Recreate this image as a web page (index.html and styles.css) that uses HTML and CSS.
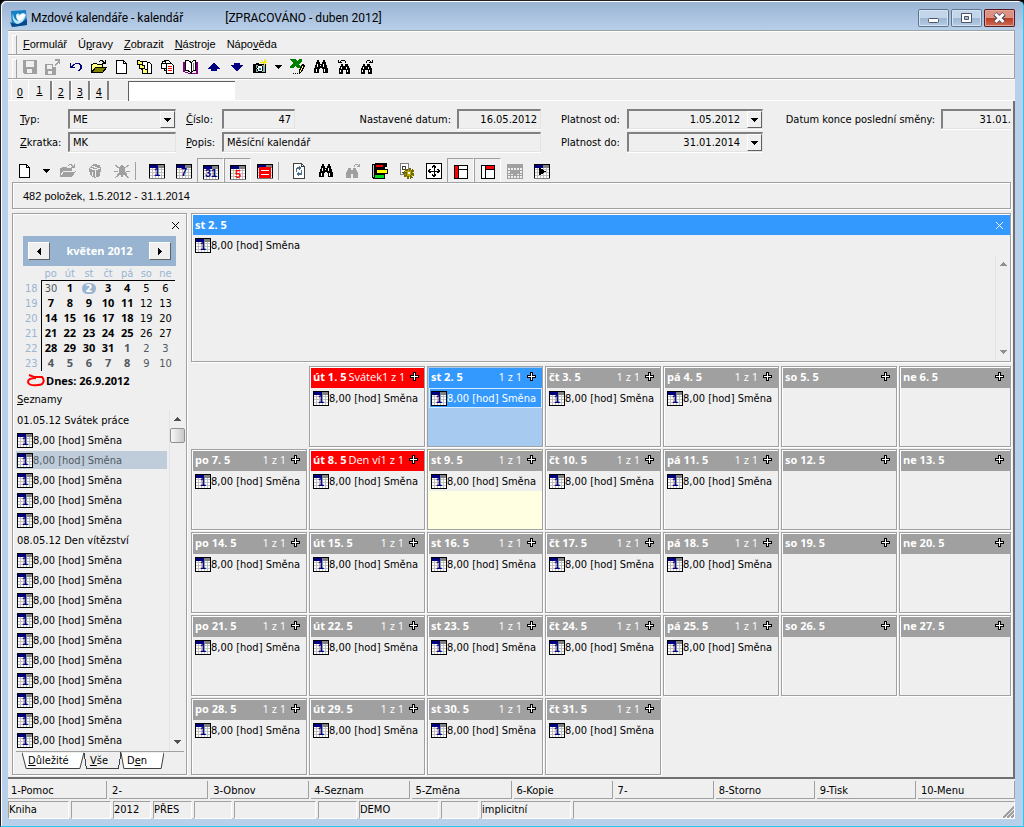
FILE: index.html
```html
<!DOCTYPE html>
<html lang="cs">
<head>
<meta charset="utf-8">
<title>Mzdové kalendáře - kalendář</title>
<link rel="stylesheet" href="styles.css">
</head>
<body>
<svg class="sprite" width="0" height="0" aria-hidden="true">
  <symbol id="cal" viewBox="0 0 16 15"><path fill="#fff" d="M0 0h16v15H0z"/><path stroke="#c0c0c0" d="M3.500 4v10M6.500 4v10M9.500 4v10M12.500 4v10M1 5.500h14M1 8.500h14M1 11.500h14"/><path fill="#000080" d="M1 1h8v3H1z"/><path fill="#808080" d="M9 1h6v3H9z"/><path fill="none" stroke="#000" d="M.5.500h15v14H.5z"/></symbol>
  <symbol id="cal1" viewBox="0 0 16 15"><use href="#cal"/><text x="8" y="12" class="num">1</text></symbol>
  <symbol id="cal7" viewBox="0 0 16 15"><use href="#cal"/><text x="8" y="12" class="num">7</text></symbol>
  <symbol id="cal31" viewBox="0 0 16 15"><use href="#cal"/><text x="8" y="12" class="num">31</text></symbol>
  <symbol id="cal5" viewBox="0 0 16 15"><use href="#cal"/><text x="8" y="13" class="num red">5</text></symbol>
  <symbol id="calred" viewBox="0 0 16 15"><use href="#cal"/><path fill="red" d="M2 3h12v11H2z"/><path fill="#fff" d="M4 6h8v1H4zM4 10h8v1H4z"/></symbol>
  <symbol id="calplay" viewBox="0 0 16 15"><use href="#cal"/><path d="M5 4l7 4-7 4z"/></symbol>
  <symbol id="plus" viewBox="0 0 9 9"><path d="M3 0h3v3h3v3H6v3H3V6H0V3h3z"/><path fill="#fff" d="M4 1h1v3h3v1H5v3H4V5H1V4h3z"/></symbol>
  <symbol id="save" viewBox="0 0 16 16"><path fill="#a0a0a0" fill-rule="evenodd" d="M1 1h14v14H2l-1-1zM4 2v6h8V2zM5 10v4h5v-4z"/></symbol>
  <symbol id="saveas" viewBox="0 0 16 16"><path fill="#a0a0a0" fill-rule="evenodd" d="M0 5h8v3h3v8H0zM2 6v4h5V6zM3 12v3h4v-3z"/><path fill="#a0a0a0" d="M10 0h5v5h-1V3l-4 4-1-1 4-4h-3z"/></symbol>
  <symbol id="undo" viewBox="0 0 16 16"><path fill="#000080" d="M2 4h1v3h1V6h1V5h2V4h5v1h1v1h1v4h-1v1h-1v1h-2v-1h1v-1h1V6h-1V5H7v1H6v1H5v1h2v1H2z"/></symbol>
  <symbol id="open" viewBox="0 0 16 16"><path fill="#ffff80" stroke="#000" d="M.5 13.500v-8h1l1-1h3l1 1h5v3h4l-4 5z"/><path fill="#808000" stroke="#000" d="M.5 13.500l4-5h11l-4 5z"/><path d="M8 2h1V1h3v1h1v1h1V1h1v4h-4V4h1V3h-1V2H9v1H8z"/></symbol>
  <symbol id="opengray" viewBox="0 0 16 16"><path fill="#a0a0a0" d="M0 14V5h1l1-1h4l1 1h5v3h4l-4 6z"/><path stroke="#efefef" d="M4 8.500h11M1 12l3-4"/><path fill="#a0a0a0" d="M8 2h1V1h3v1h1v1h1V1h1v4h-4V4h1V3h-1V2H9v1H8z"/></symbol>
  <symbol id="page" viewBox="0 0 16 16"><path fill="#fff" stroke="#000" d="M2.500 1.500h7l3 3v10h-10z"/><path fill="none" stroke="#000" d="M9.500 1.500v3h3"/></symbol>
  <symbol id="tree" viewBox="0 0 16 16"><path fill="#fff" stroke="#000" d="M7.500 3.500h5l2 2v9h-7z"/><path fill="#fff" stroke="#000" d="M4.500 2.500h5l1 1v7h-6z"/><path fill="#ffff60" stroke="#000" d="M.5 1.500h2l1 1h2v3h-5zM2.500 5.500h2l1 1h2v3h-5zM5.500 9.500h2l1 1h2v4h-5z"/></symbol>
  <symbol id="copy" viewBox="0 0 16 16"><path fill="#fff" stroke="#000" d="M4.500 1.500h4l2 2v8h-6z"/><path fill="#fff" stroke="#000" d="M1.500 4.500h5v5h-5zM2.500 4.500v-2h3v2"/><path fill="#fff" stroke="#000" d="M6.500 4.500h5l2 2v8h-7z"/><path stroke="red" d="M8 7.500h4M8 9.500h4M8 11.500h4"/></symbol>
  <symbol id="book" viewBox="0 0 16 16"><path fill="#800080" d="M0 3h2v10l5 1h6V3h2v12H6l-6-2z"/><path fill="#fff" stroke="#000" d="M2.500 1.500c3 0 5 1 5.500 2v10c-1-1-3-2-5.500-2z"/><path fill="#fff" stroke="#000" d="M8.500 3.500l2-2h2v10h-2l-2 2z"/><path stroke="#808080" d="M10.500 4v7"/></symbol>
  <symbol id="up" viewBox="0 0 16 16"><path fill="#000080" d="M8 4h1v1h1v1h1v1h1v1h1v1h1v1h-3v2H5v-2H2V9h1V8h1V7h1V6h1V5h1V4z"/></symbol>
  <symbol id="down" viewBox="0 0 16 16"><path fill="#000080" d="M5 4h6v2h3v1h-1v1h-1v1h-1v1h-1v1H9v1H7v-1H6v-1H5V9H4V8H3V7H2V6h3z"/></symbol>
  <symbol id="camera" viewBox="0 0 16 16"><path fill="#90b0b0" stroke="#000" d="M1.500 5.500h12v8h-12z"/><path d="M2 6h2v7H2zM4 4h3v1H4z"/><circle cx="8" cy="9.500" r="3" fill="#fff" stroke="#000"/><path fill="#008080" d="M7 9h2v2H7z"/><path stroke="#f0e800" d="M9.500 1.500l4 4M14.500 1.500l-4 4M12 0v7M8 3.500h7"/></symbol>
  <symbol id="excel" viewBox="0 0 16 16"><path fill="#008000" d="M0 0h6l1 2 2-2h3v2L9 5l2 3v1H7L5 7 3 9H0V8l3-4-3-3z"/><path fill="#ffff60" stroke="#000" d="M12.500 5.500l2 1-3 6-2 2v-3z"/><path d="M3 14h1v1H3zM5 14h1v1H5zM7 14h1v1H7z"/></symbol>
  <symbol id="bino" viewBox="0 0 16 16"><path d="M4 1h2v2h1v2h2V3h1V1h2v2h1v3h1v3h1v5h-5v-4H9V9H7v1H6v4H1V9h1V6h1V3h1z"/><path fill="#fff" d="M4 5h1v3H4zM3 10h1v3H3zM10 5h1v3h-1zM11 10h1v3h-1zM7 6h1v1H7z"/></symbol>
  <symbol id="bino-prev" viewBox="0 0 16 16"><path d="M5 5h2v2h2V5h3v2h1v2h1v6h-4v-4H7v4H3V9h1V7h1zM2 1h1v2h1V2h1V1h4v1h1v2H9V2H5v1h1v1H2z"/><path fill="#fff" d="M5 8h1v2H5zM4 11h1v2H4zM10 8h1v2h-1zM11 11h1v2h-1z"/></symbol>
  <symbol id="bino-next" viewBox="0 0 16 16"><path d="M4 5h2v2h2V5h3v2h1v2h1v6H9v-4H6v4H2V9h1V7h1zM14 1h-1v2h-1V2h-1V1H8v1H7v2h1V2h3v1h-1v1h4z"/><path fill="#fff" d="M4 8h1v2H4zM3 11h1v2H3zM9 8h1v2H9zM10 11h1v2h-1z"/></symbol>
  <symbol id="bino-gray" viewBox="0 0 16 16"><path fill="#a0a0a0" d="M3 5h3v2h2V5h3v2h1v2h1v6H8v-4H6v4H1V9h1V7h1zM15 1h-1v1h-1V1h-3v1H9v2h1V2h3v1h-1v1h3z"/></symbol>
  <symbol id="cube" viewBox="0 0 16 16"><path fill="#a0a0a0" d="M2 5l5-4 6 1 1 3-1 8-5 2-5-3z"/><path stroke="#efefef" fill="none" d="M3 5l5 2 5-2M8 7v7M5 3l5 2M5 9v4"/></symbol>
  <symbol id="bell" viewBox="0 0 16 16"><path fill="#a0a0a0" d="M7 2h2l2 3v4l2 2v1H9v2H7v-2H3v-1l2-2V5z"/><path stroke="#a0a0a0" d="M1 2l4 3M15 2l-4 3M0 8.500h4M16 8.500h-4M1 15l4-3M15 15l-4-3"/></symbol>
  <symbol id="refresh" viewBox="0 0 16 16"><path fill="#fff" stroke="#404040" d="M2.500.500h8l3 3v12h-11z"/><path fill="none" stroke="#404040" d="M10.500.500v3h3"/><path fill="#507090" d="M8 3l3 2-3 2V6H6v3H5V5l1-1h2zM8 13l-3-2 3-2v1h2V7h1v4l-1 1H8z"/></symbol>
  <symbol id="bars" viewBox="0 0 16 16"><path d="M0 1h2l1-1h12v4h-2v2h3v5h-3v5H1L0 14z"/><path fill="red" d="M4 2h7v2H4z"/><path fill="#ff0" d="M5 7h10v3H5z"/><path fill="#00d820" d="M3 12h9v3H3z"/><path stroke="#c0c0c0" d="M1.500 2v12"/><path fill="#efefef" d="M13 4h3v2h-3zM13 11h3v5h-3z"/></symbol>
  <symbol id="gear" viewBox="0 0 16 16"><path fill="#fff" stroke="#808080" d="M1.500.500h8v11h-8z"/><path fill="none" stroke="#404040" d="M3.500 3.500h3v3h-3zM3 9.500h3"/><circle cx="10" cy="10.500" r="4" fill="#b8a800" stroke="#706800" stroke-width="3" stroke-dasharray="2 1"/><path fill="#fff" d="M9 9h2v2H9z"/></symbol>
  <symbol id="fit" viewBox="0 0 16 16"><path fill="#fff" stroke="#000" d="M.5.500h15v15H.5z"/><path fill="none" stroke="#000" d="M8 2v12M2 8h12M6 4.500L8 2.500l2 2M6 11.500l2 2 2-2M4.500 6l-2 2 2 2M11.500 6l2 2-2 2"/></symbol>
  <symbol id="paneleft" viewBox="0 0 16 16"><path fill="#fff" stroke="#000" d="M1.500 1.500h13v13h-13zM5.500 1v14M5 5.500h10"/><path fill="red" d="M2 2h3v12H2z"/></symbol>
  <symbol id="panetop" viewBox="0 0 16 16"><path fill="#fff" stroke="#000" d="M1.500 1.500h13v13h-13zM5.500 1v14M5 5.500h10"/><path fill="red" d="M6 2h8v3H6z"/></symbol>
  <symbol id="gridgray" viewBox="0 0 16 15"><path fill="#a0a0a0" d="M0 0h16v15H0z"/><path fill="#efefef" d="M1 4h2v2H1zM4 4h2v2H4zM7 4h2v2H7zM10 4h2v2h-2zM13 4h2v2h-2zM1 7h2v2H1zM13 7h2v2h-2zM1 10h2v1H1zM4 10h2v1H4zM10 10h2v1h-2zM13 10h2v1h-2zM1 12h2v2H1zM4 12h2v2H4zM7 12h2v2H7zM10 12h2v2h-2zM13 12h2v2h-2z"/></symbol>
  <symbol id="close" viewBox="0 0 9 9"><path fill="none" stroke="currentColor" stroke-width="1.300" d="M1 1l7 7M8 1L1 8"/></symbol>
  <symbol id="caret" viewBox="0 0 7 4"><path fill="currentColor" d="M0 0h7v1H6v1H5v1H4v1H3V3H2V2H1V1H0z"/></symbol>
  <symbol id="prev" viewBox="0 0 4 7"><path d="M3 0h1v7H3V6H2V5H1V4H0V3h1V2h1V1h1z"/></symbol>
  <symbol id="next" viewBox="0 0 4 7"><path d="M1 0H0v7h1V6h1V5h1V4h1V3H3V2H2V1H1z"/></symbol>
  <symbol id="scrollup" viewBox="0 0 7 4"><path fill="currentColor" d="M3 0h1v1h1v1h1v1h1v1H0V3h1V2h1V1h1z"/></symbol>
  <symbol id="tabshape" viewBox="0 0 60 17" preserveAspectRatio="none"><path fill="currentColor" stroke="#404040" vector-effect="non-scaling-stroke" d="M0 .5L4 16.500H56L60 .5"/></symbol>
</svg>

<div class="window">
  <header class="titlebar">
    <svg class="logo" viewBox="0 0 17 17"><path fill="#1580c4" d="M1 1l15-1 1 15-15 2z"/><path fill="#0a4a88" d="M0 12c5 3 11 2 17-3v6L2 17z"/><path fill="#bfe6f8" d="M3 3c-1 5 0 9 4 11 4 0 8-4 9-9-1-2-4-3-6 0C9 3 7 3 6 5c0 3 1 5 3 6-3 0-6-3-6-8z"/><path fill="#fff" d="M9 7c1-3 4-4 6-2-1 3-3 5-6 6-2-2-3-4-2-6 1 0 2 1 2 2z"/></svg>
    <h1>Mzdové kalendáře - kalendář</h1>
    <span class="state">[ZPRACOVÁNO - duben 2012]</span>
    <div class="winbtns">
      <button aria-label="Minimalizovat"><svg width="31" height="18"><rect x="10.500" y="9.500" width="10" height="4" rx="1" fill="#fff" stroke="#4a5568"/></svg></button>
      <button aria-label="Maximalizovat"><svg width="31" height="18"><path fill="#fff" stroke="#4a5568" d="M10.500 4.500h10v9h-10z"/><path fill="#a9c1dc" stroke="#4a5568" d="M13.500 7.500h4v3h-4z"/></svg></button>
      <button class="x" aria-label="Zavřít"><svg width="31" height="18"><path stroke="#4a4a5a" stroke-width="5" d="M11 5l9 8M20 5l-9 8"/><path stroke="#fff" stroke-width="3" d="M11.500 5l8 8M19.500 5l-8 8"/></svg></button>
    </div>
  </header>

  <div class="client">
    <nav class="band menu">
      <button><u>F</u>ormulář</button><button>Ú<u>p</u>ravy</button><button><u>Z</u>obrazit</button><button><u>N</u>ástroje</button><button>Nápo<u>v</u>ěda</button>
    </nav>
    <div class="band tools" role="toolbar" aria-label="Hlavní">
      <button aria-label="Uložit"><svg><use href="#save"/></svg></button><button aria-label="Uložit jako"><svg><use href="#saveas"/></svg></button><button aria-label="Zpět"><svg><use href="#undo"/></svg></button><button aria-label="Otevřít"><svg><use href="#open"/></svg></button><button aria-label="Nový"><svg><use href="#page"/></svg></button><button aria-label="Strom"><svg><use href="#tree"/></svg></button><button aria-label="Kopie"><svg><use href="#copy"/></svg></button><button aria-label="Kniha"><svg><use href="#book"/></svg></button><button aria-label="Nahoru"><svg><use href="#up"/></svg></button><button aria-label="Dolů"><svg><use href="#down"/></svg></button><button aria-label="Snímek"><svg><use href="#camera"/></svg></button><button class="drop" aria-label="Více"><svg class="caret"><use href="#caret"/></svg></button><button aria-label="Export"><svg><use href="#excel"/></svg></button><button aria-label="Hledat"><svg><use href="#bino"/></svg></button><button aria-label="Hledat předchozí"><svg><use href="#bino-prev"/></svg></button><button aria-label="Hledat další"><svg><use href="#bino-next"/></svg></button>
    </div>
    <div class="pages">
      <button><u>0</u></button><button class="on"><u>1</u></button><button><u>2</u></button><button><u>3</u></button><button><u>4</u></button>
      <input type="text" aria-label="Vyhledat">
    </div>

    <main class="sheet">
      <form class="fields">
        <label for="typ"><u>T</u>yp:</label>
        <div class="field combo"><select id="typ"><option>ME</option></select><span class="arrow"><svg class="caret"><use href="#caret"/></svg></span></div>
        <label class="mid" for="cislo"><u>Č</u>íslo:</label>
        <input class="field num-in" id="cislo" value="47">
        <label class="right" for="nd">Nastavené datum:</label>
        <input class="field num-in" id="nd" value="16.05.2012">
        <label class="plat" for="od">Platnost od:</label>
        <div class="field combo"><input class="num-in" id="od" value="1.05.2012"><button type="button" class="arrow" aria-label="Vybrat datum od"><svg class="caret"><use href="#caret"/></svg></button></div>
        <label class="right" for="konec">Datum konce poslední směny:</label>
        <input class="field num-in cut" id="konec" value="31.01.">
        <label for="zkr"><u>Z</u>kratka:</label>
        <input class="field" id="zkr" value="MK">
        <label class="mid" for="popis"><u>P</u>opis:</label>
        <input class="field wide" id="popis" value="Měsíční kalendář">
        <label class="plat" for="do">Platnost do:</label>
        <div class="field combo"><input class="num-in" id="do" value="31.01.2014"><button type="button" class="arrow" aria-label="Vybrat datum do"><svg class="caret"><use href="#caret"/></svg></button></div>
      </form>

      <div class="tools second" role="toolbar" aria-label="Kalendář">
        <button aria-label="Nový"><svg><use href="#page"/></svg></button><button class="drop" aria-label="Více"><svg class="caret"><use href="#caret"/></svg></button><button aria-label="Otevřít"><svg><use href="#opengray"/></svg></button><button aria-label="Koš"><svg><use href="#cube"/></svg></button><button aria-label="Upozornění"><svg><use href="#bell"/></svg></button><span class="sep"></span><button aria-label="Den"><svg><use href="#cal1"/></svg></button><button aria-label="Týden"><svg><use href="#cal7"/></svg></button><button class="on" aria-label="Měsíc"><svg><use href="#cal31"/></svg></button><button class="on" aria-label="Svátky"><svg><use href="#cal5"/></svg></button><button aria-label="Výluky"><svg><use href="#calred"/></svg></button><span class="sep"></span><button aria-label="Obnovit"><svg><use href="#refresh"/></svg></button><button aria-label="Hledat"><svg><use href="#bino"/></svg></button><button aria-label="Hledat další"><svg><use href="#bino-gray"/></svg></button><button aria-label="Barvy"><svg><use href="#bars"/></svg></button><button aria-label="Nastavení"><svg><use href="#gear"/></svg></button><button aria-label="Přizpůsobit"><svg><use href="#fit"/></svg></button><button class="on" aria-label="Levý panel"><svg><use href="#paneleft"/></svg></button><button class="on" aria-label="Horní panel"><svg><use href="#panetop"/></svg></button><button aria-label="Mřížka"><svg><use href="#gridgray"/></svg></button><button aria-label="Spustit"><svg><use href="#calplay"/></svg></button>
      </div>

      <div class="info">482 položek, 1.5.2012 - 31.1.2014</div>

      <div class="work">
        <aside class="side frame">
          <button class="shut" aria-label="Zavřít panel"><svg class="xs"><use href="#close"/></svg></button>
          <div class="month"><button aria-label="Předchozí měsíc"><svg width="4" height="7"><use href="#prev"/></svg></button><strong>květen 2012</strong><button aria-label="Další měsíc"><svg width="4" height="7"><use href="#next"/></svg></button></div>
          <table class="mini">
            <thead><tr><td></td><th>po</th><th>út</th><th>st</th><th>čt</th><th>pá</th><th>so</th><th>ne</th></tr></thead>
            <tbody>
              <tr><th>18</th><td class="dim">30</td><td><b>1</b></td><td><span class="sel">2</span></td><td><b>3</b></td><td><b>4</b></td><td>5</td><td>6</td></tr>
              <tr><th>19</th><td><b>7</b></td><td><b>8</b></td><td><b>9</b></td><td><b>10</b></td><td><b>11</b></td><td>12</td><td>13</td></tr>
              <tr><th>20</th><td><b>14</b></td><td><b>15</b></td><td><b>16</b></td><td><b>17</b></td><td><b>18</b></td><td>19</td><td>20</td></tr>
              <tr><th>21</th><td><b>21</b></td><td><b>22</b></td><td><b>23</b></td><td><b>24</b></td><td><b>25</b></td><td>26</td><td>27</td></tr>
              <tr><th>22</th><td><b>28</b></td><td><b>29</b></td><td><b>30</b></td><td><b>31</b></td><td class="dim"><b>1</b></td><td class="dim">2</td><td class="dim">3</td></tr>
              <tr><th>23</th><td class="dim"><b>4</b></td><td class="dim"><b>5</b></td><td class="dim"><b>6</b></td><td class="dim"><b>7</b></td><td class="dim"><b>8</b></td><td class="dim">9</td><td class="dim">10</td></tr>
            </tbody>
          </table>
          <div class="today"><svg width="18" height="14" viewBox="0 0 18 14"><path fill="none" stroke="red" stroke-width="2" d="M2 1l5 2 8 0c3 3 2 8-4 8-7 1-10-1-10-3 0-3 4-4 8-4"/></svg><b>Dnes: 26.9.2012</b></div>
          <div class="lists"><u>S</u>eznamy</div>
          <div class="listbox">
            <ul>
              <li>01.05.12 Svátek práce</li>
              <li><svg><use href="#cal1"/></svg>8,00 [hod] Směna</li>
              <li class="sel"><svg><use href="#cal1"/></svg>8,00 [hod] Směna</li>
              <li><svg><use href="#cal1"/></svg>8,00 [hod] Směna</li>
              <li><svg><use href="#cal1"/></svg>8,00 [hod] Směna</li>
              <li><svg><use href="#cal1"/></svg>8,00 [hod] Směna</li>
              <li>08.05.12 Den vítězství</li>
              <li><svg><use href="#cal1"/></svg>8,00 [hod] Směna</li>
              <li><svg><use href="#cal1"/></svg>8,00 [hod] Směna</li>
              <li><svg><use href="#cal1"/></svg>8,00 [hod] Směna</li>
              <li><svg><use href="#cal1"/></svg>8,00 [hod] Směna</li>
              <li><svg><use href="#cal1"/></svg>8,00 [hod] Směna</li>
              <li><svg><use href="#cal1"/></svg>8,00 [hod] Směna</li>
              <li><svg><use href="#cal1"/></svg>8,00 [hod] Směna</li>
              <li><svg><use href="#cal1"/></svg>8,00 [hod] Směna</li>
              <li><svg><use href="#cal1"/></svg>8,00 [hod] Směna</li>
              <li><svg><use href="#cal1"/></svg>8,00 [hod] Směna</li>
            </ul>
            <div class="scroll"><svg class="caret"><use href="#scrollup"/></svg><span class="thumb"></span><svg class="caret end"><use href="#caret"/></svg></div>
          </div>
          <div class="sheets">
            <button class="t1"><svg><use href="#tabshape"/></svg><span><u>D</u>ůležité</span></button><button class="t2 on"><svg><use href="#tabshape"/></svg><span><u>V</u>še</span></button><button class="t3"><svg><use href="#tabshape"/></svg><span>D<u>e</u>n</span></button>
          </div>
        </aside>

        <section class="right-pane">
          <article class="detail frame">
            <h2>st 2. 5<button aria-label="Zavřít detail"><svg class="xs"><use href="#close"/></svg></button></h2>
            <p class="item"><svg><use href="#cal1"/></svg>8,00 [hod] Směna</p>
            <div class="scroll faint"><svg class="caret"><use href="#scrollup"/></svg><svg class="caret end"><use href="#caret"/></svg></div>
          </article>
          <div class="grid">
            <div></div>
            <article class="day frame hol"><h3>út 1. 5 <em>Svátek</em><i>1 z 1</i><svg><use href="#plus"/></svg></h3><p class="item"><svg><use href="#cal1"/></svg>8,00 [hod] Směna</p></article>
            <article class="day frame cur"><h3>st 2. 5<i>1 z 1</i><svg><use href="#plus"/></svg></h3><p class="item"><svg><use href="#cal1"/></svg>8,00 [hod] Směna</p></article>
            <article class="day frame"><h3>čt 3. 5<i>1 z 1</i><svg><use href="#plus"/></svg></h3><p class="item"><svg><use href="#cal1"/></svg>8,00 [hod] Směna</p></article>
            <article class="day frame"><h3>pá 4. 5<i>1 z 1</i><svg><use href="#plus"/></svg></h3><p class="item"><svg><use href="#cal1"/></svg>8,00 [hod] Směna</p></article>
            <article class="day frame"><h3>so 5. 5<i></i><svg><use href="#plus"/></svg></h3></article>
            <article class="day frame"><h3>ne 6. 5<i></i><svg><use href="#plus"/></svg></h3></article>

            <article class="day frame"><h3>po 7. 5<i>1 z 1</i><svg><use href="#plus"/></svg></h3><p class="item"><svg><use href="#cal1"/></svg>8,00 [hod] Směna</p></article>
            <article class="day frame hol"><h3>út 8. 5 <em>Den ví</em><i>1 z 1</i><svg><use href="#plus"/></svg></h3><p class="item"><svg><use href="#cal1"/></svg>8,00 [hod] Směna</p></article>
            <article class="day frame note"><h3>st 9. 5<i>1 z 1</i><svg><use href="#plus"/></svg></h3><p class="item"><svg><use href="#cal1"/></svg>8,00 [hod] Směna</p></article>
            <article class="day frame"><h3>čt 10. 5<i>1 z 1</i><svg><use href="#plus"/></svg></h3><p class="item"><svg><use href="#cal1"/></svg>8,00 [hod] Směna</p></article>
            <article class="day frame"><h3>pá 11. 5<i>1 z 1</i><svg><use href="#plus"/></svg></h3><p class="item"><svg><use href="#cal1"/></svg>8,00 [hod] Směna</p></article>
            <article class="day frame"><h3>so 12. 5<i></i><svg><use href="#plus"/></svg></h3></article>
            <article class="day frame"><h3>ne 13. 5<i></i><svg><use href="#plus"/></svg></h3></article>

            <article class="day frame"><h3>po 14. 5<i>1 z 1</i><svg><use href="#plus"/></svg></h3><p class="item"><svg><use href="#cal1"/></svg>8,00 [hod] Směna</p></article>
            <article class="day frame"><h3>út 15. 5<i>1 z 1</i><svg><use href="#plus"/></svg></h3><p class="item"><svg><use href="#cal1"/></svg>8,00 [hod] Směna</p></article>
            <article class="day frame"><h3>st 16. 5<i>1 z 1</i><svg><use href="#plus"/></svg></h3><p class="item"><svg><use href="#cal1"/></svg>8,00 [hod] Směna</p></article>
            <article class="day frame"><h3>čt 17. 5<i>1 z 1</i><svg><use href="#plus"/></svg></h3><p class="item"><svg><use href="#cal1"/></svg>8,00 [hod] Směna</p></article>
            <article class="day frame"><h3>pá 18. 5<i>1 z 1</i><svg><use href="#plus"/></svg></h3><p class="item"><svg><use href="#cal1"/></svg>8,00 [hod] Směna</p></article>
            <article class="day frame"><h3>so 19. 5<i></i><svg><use href="#plus"/></svg></h3></article>
            <article class="day frame"><h3>ne 20. 5<i></i><svg><use href="#plus"/></svg></h3></article>

            <article class="day frame"><h3>po 21. 5<i>1 z 1</i><svg><use href="#plus"/></svg></h3><p class="item"><svg><use href="#cal1"/></svg>8,00 [hod] Směna</p></article>
            <article class="day frame"><h3>út 22. 5<i>1 z 1</i><svg><use href="#plus"/></svg></h3><p class="item"><svg><use href="#cal1"/></svg>8,00 [hod] Směna</p></article>
            <article class="day frame"><h3>st 23. 5<i>1 z 1</i><svg><use href="#plus"/></svg></h3><p class="item"><svg><use href="#cal1"/></svg>8,00 [hod] Směna</p></article>
            <article class="day frame"><h3>čt 24. 5<i>1 z 1</i><svg><use href="#plus"/></svg></h3><p class="item"><svg><use href="#cal1"/></svg>8,00 [hod] Směna</p></article>
            <article class="day frame"><h3>pá 25. 5<i>1 z 1</i><svg><use href="#plus"/></svg></h3><p class="item"><svg><use href="#cal1"/></svg>8,00 [hod] Směna</p></article>
            <article class="day frame"><h3>so 26. 5<i></i><svg><use href="#plus"/></svg></h3></article>
            <article class="day frame"><h3>ne 27. 5<i></i><svg><use href="#plus"/></svg></h3></article>

            <article class="day frame"><h3>po 28. 5<i>1 z 1</i><svg><use href="#plus"/></svg></h3><p class="item"><svg><use href="#cal1"/></svg>8,00 [hod] Směna</p></article>
            <article class="day frame"><h3>út 29. 5<i>1 z 1</i><svg><use href="#plus"/></svg></h3><p class="item"><svg><use href="#cal1"/></svg>8,00 [hod] Směna</p></article>
            <article class="day frame"><h3>st 30. 5<i>1 z 1</i><svg><use href="#plus"/></svg></h3><p class="item"><svg><use href="#cal1"/></svg>8,00 [hod] Směna</p></article>
            <article class="day frame"><h3>čt 31. 5<i>1 z 1</i><svg><use href="#plus"/></svg></h3><p class="item"><svg><use href="#cal1"/></svg>8,00 [hod] Směna</p></article>
          </div>
        </section>
      </div>
    </main>

    <footer>
      <div class="fkeys"><button>1-Pomoc</button><button>2-</button><button>3-Obnov</button><button>4-Seznam</button><button>5-Změna</button><button>6-Kopie</button><button>7-</button><button>8-Storno</button><button>9-Tisk</button><button>10-Menu</button></div>
      <div class="status"><span>Kniha</span><span></span><span>2012</span><span>PŘES</span><span></span><span></span><span></span><span>DEMO</span><span></span><span>implicitní</span><span class="last"><svg width="12" height="12"><path stroke="#a0a0a0" stroke-width="2" d="M1 12L12 1M5 12l7-7M9 12l3-3"/></svg></span></div>
    </footer>
  </div>
</div>
</body>
</html>
```
FILE: styles.css
```css
* { box-sizing: border-box; margin: 0; padding: 0; }
body { background: #000; color: #000; font: 11px/14px "DejaVu Sans Condensed", "DejaVu Sans", sans-serif; }
button, input, select { font: inherit; color: inherit; border: 0; background: none; border-radius: 0; outline: 0; }
u { text-decoration: underline; text-underline-offset: 1px; }
.sprite { display: none; }
symbol, svg { shape-rendering: crispEdges; }
.num { font: bold 11px "Liberation Sans", sans-serif; fill: #000080; text-anchor: middle; }
.num.red { fill: red; }

.window { min-height: 100vh; display: flex; flex-direction: column; padding: 0 8px 8px 7px; border: 1px solid #202028; border-right-color: #28c8f0; border-bottom-color: #28c8f0; border-radius: 6px 6px 0 0; box-shadow: inset 1px 1px #fff; background: linear-gradient(#99b3d2, #b9d0ea 30px, #b9d0ea); }
.titlebar { display: flex; align-items: center; height: 29px; padding: 5px 0 0 2px; font: 12px/16px Roboto, sans-serif; }
.logo { width: 17px; height: 17px; margin-right: 4px; shape-rendering: auto; }
.titlebar h1 { font: inherit; white-space: nowrap; }
.state { flex: 1; margin-left: 42px; white-space: nowrap; }
.winbtns { display: flex; gap: 2px; }
.winbtns button { width: 31px; height: 18px; border-radius: 2px; box-shadow: inset 0 0 0 1px #60738c, inset 0 0 0 2px #d5e3f2; background: linear-gradient(#c3d5e9 50%, #9cb6d2 50%, #b8cfe6); }
.winbtns .x { box-shadow: inset 0 0 0 1px #571a20, inset 0 0 0 2px #e2a59b; background: linear-gradient(#dd9182 50%, #b93a20 50%, #d2705a); }
.winbtns svg { display: block; shape-rendering: auto; }

.client { flex: 1; display: flex; flex-direction: column; background: #efefef; }
.band { display: flex; align-items: center; height: 24px; padding-left: 10px; border: 1px solid #a0a0a0; border-width: 1px 1px 0 0; box-shadow: inset 0 1px #fff; position: relative; }
.band::before { content: ""; position: absolute; left: 4px; top: 4px; width: 3px; height: 18px; border: 1px solid #fff; border-right-color: #a0a0a0; border-bottom-color: #a0a0a0; }
.menu { padding-left: 15px; gap: 11px; font: 11px/14px "Liberation Sans", sans-serif; padding-top: 3px; }
.tools { display: flex; }
.tools button { width: 23px; height: 23px; display: grid; place-items: center; }
.tools svg { width: 16px; height: 16px; display: block; }
.tools .drop { width: 15px; }
svg.caret { width: 7px; height: 4px; display: block; }

.pages { display: flex; height: 23px; padding: 2px 0 0 3px; border-top: 1px solid #a0a0a0; box-shadow: inset 0 1px #fff; border-bottom: 1px solid #fff; }
.pages button { width: 19px; padding-top: 4px; border-right: 2px solid #808080; border-left: 1px solid #fff; }
.pages button:first-child { width: 17px; border-right: 0; }
.pages .on { width: 24px; padding-top: 0; }
.pages input { width: 107px; height: 20px; margin-left: 19px; background: #fff; border-top: 1px solid #606060; border-left: 1px solid #606060; }

.sheet { flex: 1; display: flex; flex-direction: column; padding: 8px 2px 2px 4px; border-right: 2px solid #707070; border-bottom: 2px solid #707070; }
.fields { display: grid; grid-template-columns: 48px 108px 46px 73px 162px 84px 86px 136px 178px minmax(0, 1fr); row-gap: 3px; align-items: center; margin-left: 8px; }
.fields label { padding-top: 1px; }
.fields .mid { padding-left: 10px; }
.fields .right { text-align: right; padding-right: 6px; white-space: nowrap; }
.fields .plat { padding-left: 20px; }
.field { width: 100%; min-width: 0; height: 20px; padding: 0 3px; border: 1px solid #e3e3e3; border-top: 2px solid #808080; border-left: 2px solid #808080; box-shadow: 0 1px #fff; }
.combo { display: flex; padding: 0 0 0 3px; }
.combo select, .combo input { flex: 1; min-width: 0; appearance: none; }
.combo input { padding-right: 7px; }
.num-in { text-align: right; }
.cut { border-right: 0; padding-right: 0; }
.wide { grid-column: span 3; }
.arrow { width: 15px; display: grid; place-items: center; border: 1px solid #fff; border-right-color: #606060; border-bottom-color: #606060; }

.second { height: 24px; margin: 6px 0 0 -1px; }
.second button { width: 27px; height: 24px; padding-top: 2px; }
.second .drop { width: 16px; }
.second .on { border-top: 1px solid #a0a0a0; border-left: 1px solid #a0a0a0; border-right: 1px solid #fff; }
.sep { width: 8px; height: 18px; margin: 4px 0 2px; border-left: 1px solid #a0a0a0; }
.second .sep ~ .sep { width: 7px; }
.info { height: 27px; padding: 6px 10px; border: 1px solid #a0a0a0; box-shadow: inset 1px 1px #fff, 1px 1px #fff; font-family: "Liberation Sans", sans-serif; }

.work { flex: 1; display: flex; gap: 4px; margin-top: 4px; }
.frame { border: 1px solid #a0a0a0; box-shadow: 1px 1px #fff; padding: 1px 0 0 1px; background: linear-gradient(#fff, #fff) 0 0 / 100% 1px no-repeat, linear-gradient(#fff, #fff) 0 0 / 1px 100% no-repeat; }
.side { width: 175px; display: flex; flex-direction: column; }
.shut { align-self: flex-end; width: 21px; height: 21px; display: grid; place-items: center; }
.xs { width: 9px; height: 9px; display: block; shape-rendering: auto; }
b, strong { font-family: "Open Sans", sans-serif; font-weight: bold; }
.month { display: flex; align-items: center; justify-content: space-between; height: 30px; margin: 0 10px 0 9px; padding: 0 5px; background: #99b4d1; color: #fff; }
.month button { width: 22px; height: 18px; display: grid; place-items: center; background: #efefef; border: 1px solid #fff; border-right: 1px solid #606060; border-bottom: 1px solid #606060; }
.mini { border-collapse: collapse; margin: 1px 0 0 8px; table-layout: fixed; width: 153px; text-align: center; }
.mini th { font-weight: normal; color: #99b4d1; }
.mini td, .mini th { height: 15px; line-height: 15px; width: 19px; }
.mini b { line-height: 11px; }
.mini thead th, .mini thead td { height: 13px; line-height: 13px; }
.mini thead th { border-bottom: 1px solid #000; }
.mini tbody th { border-right: 1px solid #000; }
.mini .dim { color: #505860; }
.mini .sel { display: block; width: 14px; height: 11px; margin: 0 auto; line-height: 11px; border-radius: 6px; background: #99b4d1; color: #fff; font-weight: bold; }
.today { display: flex; height: 20px; align-items: center; padding-left: 13px; gap: 1px; }
.today svg { shape-rendering: auto; }
.lists { height: 19px; padding: 2px 3px; }
.listbox { flex: 1; display: flex; justify-content: space-between; padding: 0 2px 0 2px; }
ul { list-style: none; width: 151px; }
li, .item { display: flex; align-items: center; height: 20px; padding: 1px 0 0 1px; white-space: nowrap; }
li.sel { background: linear-gradient(#bfcddb, #bfcddb) 0 1px / 100% 18px no-repeat; color: #505860; }
li svg, .item svg { width: 16px; height: 15px; flex: none; }
.item { padding-left: 2px; }
.scroll { width: 15px; display: flex; flex-direction: column; align-items: center; padding: 7px 0; border-left: 1px solid #e3e3e3; color: #505050; }
.scroll .end { margin-top: auto; }
.thumb { width: 15px; height: 15px; margin-top: 7px; border: 1px solid #909090; border-radius: 2px; background: linear-gradient(90deg, #f8f8f8, #c8c8c8); }
.sheets { display: flex; height: 23px; margin: 0 2px 0 2px; padding-left: 6px; border-top: 1px solid #a0a0a0; }
.sheets button { position: relative; height: 17px; color: #fff; text-align: left; padding-left: 6px; }
.sheets button span { position: relative; color: #000; }
.sheets button svg { position: absolute; left: 0; top: 0; width: 100%; height: 17px; }
.sheets .on { color: #efefef; }
.t1 { width: 62px; }
.t2 { width: 37px; }
.t3 { width: 43px; }

.right-pane { flex: 1; min-width: 0; display: flex; flex-direction: column; gap: 4px; }
.detail { height: 149px; display: flex; flex-direction: column; }
h2, h3 { display: flex; align-items: center; height: 20px; flex: none; font: bold 11px/14px "Open Sans", sans-serif; color: #fff; background: #3399ff; padding-left: 2px; white-space: nowrap; }
h2 button { margin-left: auto; width: 21px; height: 20px; display: grid; place-items: center; }
.faint { flex: 1; align-self: flex-end; color: #909090; }
.grid { flex: 1; display: grid; grid-template-columns: repeat(6, minmax(0, 116fr)) minmax(0, 112fr); grid-template-rows: repeat(4, 81px) minmax(76px, 1fr); gap: 2px; }
.day { min-width: 0; }
h3 { background: #a0a0a0; padding-bottom: 2px; }
h3 em { font-style: normal; font-weight: normal; margin-left: 2px; }
h3 i { font-style: normal; font-weight: normal; margin-left: auto; }
h3 svg { width: 9px; height: 9px; margin: 0 6px 2px 5px; flex: none; }
.hol h3 { background: red; }
.cur { background: #a6caf0; }
.cur h3 { background: #3399ff; }
.cur .item { background: #3399ff; color: #fff; box-shadow: inset 0 0 0 1px #d8ebff; }
.note { background: #ffffe1; }
.note .item { background: #efefef; }

.fkeys { display: grid; grid-template-columns: repeat(9, 99fr) 97fr; gap: 2px; height: 20px; padding-top: 2px; }
.fkeys button { text-align: left; padding: 2px 0 0 3px; border-right: 1px solid #a0a0a0; border-bottom: 1px solid #a0a0a0; }
.status { display: grid; grid-template-columns: 61px 40px 38px 39px 38px 82px 39px 80px 38px 90px 1fr; gap: 2px; height: 19px; padding-top: 2px; }
.status span { border: 1px solid #a0a0a0; border-right-color: #fff; border-bottom-color: #fff; line-height: 16px; }
.status .last { display: flex; justify-content: flex-end; align-items: flex-end; }
```
